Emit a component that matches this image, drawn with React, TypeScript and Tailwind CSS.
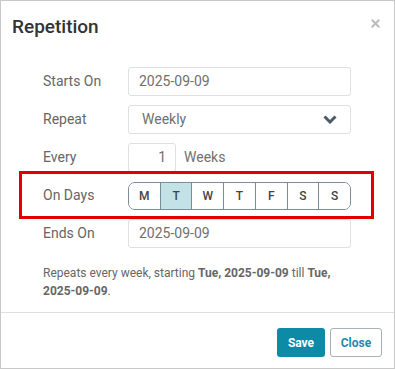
import { X } from "lucide-react";

const days = ["M", "T", "W", "T", "F", "S", "S"];

function Field({ label, children }: { label: string; children: React.ReactNode }) {
	return (
		<div className="flex h-[29px] items-center">
			<div className="w-[85px] shrink-0 text-[14px] text-[#666]">{label}</div>
			{children}
		</div>
	);
}

export default function App() {
	return (
		<div
			className="flex h-[369px] w-[395px] flex-col border border-[#c8c8c8] bg-white"
			style={{ fontFamily: "Roboto, 'Liberation Sans', sans-serif" }}
		>
			<div className="flex items-start justify-between pl-[11px] pr-[12px] pt-[14px]">
				<h1 className="text-[19px] font-medium leading-[24px] text-[#333]">Repetition</h1>
				<X className="mt-[2px] size-[13px] text-[#bbb]" strokeWidth={3.5} />
			</div>

			<div className="flex flex-col gap-[9px] pl-[42px] pr-[43px] pt-[28px]">
				<Field label="Starts On">
					<div className="flex h-[29px] flex-1 items-center rounded-[3px] border border-[#dde1e4] px-[10px] text-[14px] text-[#707070]">
						2025-09-09
					</div>
				</Field>
				<Field label="Repeat">
					<div className="flex h-[29px] flex-1 items-center justify-between rounded-[3px] border border-[#dde1e4] pl-[13px] pr-[13px] text-[14px] text-[#707070]">
						Weekly
						<svg width="14" height="9" viewBox="0 0 14 9" aria-hidden>
							<path d="M1.5 1.5 L7 7 L12.5 1.5" fill="none" stroke="#4d5b69" strokeWidth="3" />
						</svg>
					</div>
				</Field>
				<Field label="Every">
					<div className="flex h-[29px] w-[48px] items-center justify-end rounded-[3px] border border-[#dde1e4] px-[9px] text-[14px] text-[#707070]">
						1
					</div>
					<span className="ml-[8px] text-[14px] text-[#707070]">Weeks</span>
				</Field>
				<div className="relative">
					<div className="pointer-events-none absolute -bottom-[9px] -left-[24px] -right-[23px] -top-[10px] border-[3px] border-[#e00000]" />
					<Field label="On Days">
						<div className="flex h-[28px] flex-1 overflow-hidden rounded-[7px] border border-[#7b8b99]">
							{days.map((d, i) => (
								<div
									key={i}
									className={
										"flex flex-1 items-center justify-center text-[12px] font-medium text-[#444] " +
										(i > 0 ? "border-l border-[#7b8b99] " : "") +
										(i === 1 ? "bg-[#c3e2e8]" : "bg-white")
									}
								>
									{d}
								</div>
							))}
						</div>
					</Field>
				</div>
				<Field label="Ends On">
					<div className="flex h-[29px] flex-1 items-center rounded-[3px] border border-[#dde1e4] px-[10px] text-[14px] text-[#707070]">
						2025-09-09
					</div>
				</Field>
			</div>

			<p className="mt-[16px] pl-[42px] pr-[40px] text-[12px] leading-[18px] text-[#666]">
				Repeats every week, starting <b className="font-bold">Tue, 2025-09-09</b> till{" "}
				<b className="font-bold">Tue, 2025-09-09</b>.
			</p>

			<div className="mt-auto flex justify-end gap-[5px] border-t border-[#dfdfdf] pb-[11px] pl-[11px] pr-[12px] pt-[15px]">
				<button className="h-[29px] w-[48px] rounded-[3px] bg-[#0c8aa6] text-[12px] font-bold text-white">
					Save
				</button>
				<button className="h-[29px] w-[52px] rounded-[3px] border border-[#a8b0b8] bg-white text-[12px] font-bold text-[#1a8db0]">
					Close
				</button>
			</div>
		</div>
	);
}
